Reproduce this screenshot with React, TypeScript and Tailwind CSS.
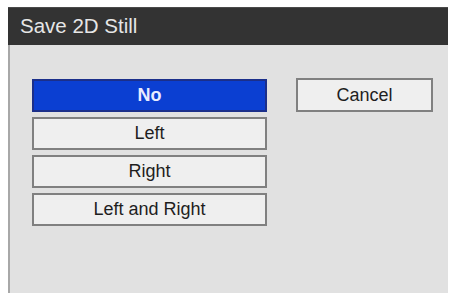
import React from "react";

const OPTIONS = ["No", "Left", "Right", "Left and Right"];

export default function App() {
  const selected = "No";

  return (
    <div className="h-[293px] w-[451px] overflow-hidden bg-white pl-[8px] pt-[7px] font-['Liberation_Sans',Arial,sans-serif]">
      <div className="flex h-[290px] w-[440px] flex-col">
        <div className="flex h-[38px] items-center border-t border-[#4a4a4a] bg-[#333333] pl-[12px] text-[20.5px] text-[#e6e6e6]">
          Save 2D Still
        </div>
        <div className="flex flex-1 border-l-2 border-[#a8a8a8] bg-[#e1e1e1] pl-[22px] pt-[34px]">
          <div className="flex w-[235px] flex-col gap-[5px]">
            {OPTIONS.map((label) => (
              <button
                key={label}
                className={
                  label === selected
                    ? "flex h-[33px] items-center justify-center border-2 border-[#1b2f8a] bg-[#0b3fd2] text-[18px] font-bold text-[#e9ecff]"
                    : "flex h-[33px] items-center justify-center border-2 border-[#808080] bg-[#efefef] text-[18px] text-[#1e1e1e]"
                }
              >
                {label}
              </button>
            ))}
          </div>
          <div className="ml-[29px]">
            <button className="-mt-px flex h-[34px] w-[137px] items-center justify-center border-2 border-[#808080] bg-[#efefef] text-[18px] text-[#1e1e1e]">
              Cancel
            </button>
          </div>
        </div>
      </div>
    </div>
  );
}
